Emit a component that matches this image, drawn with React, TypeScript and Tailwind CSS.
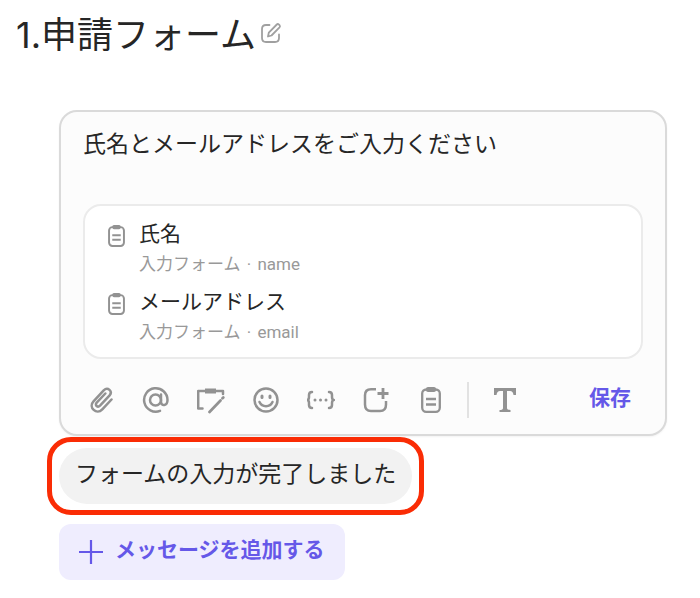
import type { ReactNode } from "react";

function ClipboardIcon({ className }: { className: string }) {
  return (
    <svg viewBox="0 0 20 26" fill="none" stroke="currentColor" strokeWidth="2.300" className={className} aria-hidden="true">
      <rect x="1.200" y="2.500" width="17.600" height="22.300" rx="4" />
      <rect x="5" y="0" width="10" height="5" rx="2" fill="currentColor" stroke="none" />
      <path d="M5 12h10M5 17.500h10" />
    </svg>
  );
}

function Stroke({ children, width = 2.5 }: { children: ReactNode; width?: number }) {
  return (
    <svg
      viewBox="0 0 28 28"
      fill="none"
      stroke="currentColor"
      strokeWidth={width}
      strokeLinecap="round"
      strokeLinejoin="round"
      className="size-7"
      aria-hidden="true"
    >
      {children}
    </svg>
  );
}

function Tool({ label, children }: { label: string; children: ReactNode }) {
  return (
    <button type="button" aria-label={label} className="flex size-7 shrink-0 items-center justify-center">
      {children}
    </button>
  );
}

const fields = [
  { title: "氏名", key: "name" },
  { title: "メールアドレス", key: "email" },
];

export default function App() {
  return (
    <main className="bg-white pt-3 pr-[33px] pb-4 pl-4 font-[Inter,'Noto_Sans_CJK_JP',sans-serif] text-[#262626]">
      <header className="flex items-center gap-1">
        <h1 className="text-[36px] leading-[46px]">1.申請フォーム</h1>
        <button type="button" aria-label="名前を編集" className="pb-1 text-[#a0a0a0]">
          <svg viewBox="0 0 22 22" fill="none" stroke="currentColor" strokeWidth="1.800" strokeLinecap="round" strokeLinejoin="round" className="size-[22px]" aria-hidden="true">
            <path d="M9.500 3H6Q2 3 2 7v9q0 4 4 4h9q4 0 4-4v-3.500" />
            <path d="M8 14.500l.8-3.800 8-8.200q1-1 2.200.1l.5.500q1 1.100 0 2.200l-8 8.200Z" />
          </svg>
        </button>
      </header>

      <div className="ml-[43px] flex flex-col items-start pt-[52px]">
        <form className="w-full rounded-[18px] border-2 border-[#dadada] bg-[#fcfcfc] px-[22px] shadow-xs" onSubmit={(e) => e.preventDefault()}>
          <textarea
            aria-label="メッセージ"
            defaultValue="氏名とメールアドレスをご入力ください"
            rows={2}
            className="mt-4 block h-19 w-full resize-none bg-transparent text-[23px] leading-8 outline-none"
          />
          <ul className="flex flex-col gap-2 rounded-[18px] border-2 border-[#ebebeb] bg-white px-[22px] pt-3 pb-[11px]">
            {fields.map((field) => (
              <li key={field.key} className="flex gap-3">
                <ClipboardIcon className="mt-[7px] h-[22px] w-[19px] shrink-0 text-[#929292]" />
                <div className="pl-px">
                  <p className="text-[21px] leading-8">{field.title}</p>
                  <p className="font-[Roboto,'Noto_Sans_CJK_JP',sans-serif] text-[17px] leading-7 text-[#999]">
                    入力フォーム <span className="mx-0.5">·</span> {field.key}
                  </p>
                </div>
              </li>
            ))}
          </ul>
          <div className="flex h-[75px] items-center gap-[27px] pt-1.5 pl-1 text-[#929292]">
            <Tool label="ファイルを添付">
              <Stroke>
                <path d="M24.500 13.500 15.300 23.300c-5.700 6-14.300-1.800-8.800-7.900L16.700 4.400c4-4 9.500.8 5.700 5.200L13 19.700c-2.300 2.300-5.600-.4-3.300-3l8.600-9.200" />
              </Stroke>
            </Tool>
            <Tool label="メンション">
              <Stroke>
                <circle cx="13.500" cy="14" r="5.500" />
                <path d="M19 8.500v7c0 5.500 6.500 4.500 6.500-1.500a11.700 11.700 0 1 0-7.500 10.900" />
              </Stroke>
            </Tool>
            <Tool label="フォームを編集">
              <Stroke>
                <path d="M5.500 22.500H1.200V5H26v3" />
                <path d="M8 5h11" strokeWidth="5" strokeLinecap="butt" />
                <path d="m12.500 26 11-11.500M25.500 12.300l.8-.8" strokeWidth="2.700" />
              </Stroke>
            </Tool>
            <Tool label="絵文字">
              <Stroke>
                <circle cx="14" cy="14" r="11.500" />
                <path d="M10 10v1.500M18 10v1.500" strokeWidth="3" />
                <path d="M7.500 16c2.500 5.500 10.500 5.500 13 0" />
              </Stroke>
            </Tool>
            <Tool label="変数">
              <Stroke>
                <path d="M5 6q-3 0-3 3v2q0 3-2 3 2 0 2 3v2q0 3 3 3M22 6q3 0 3 3v2q0 3 2 3-2 0-2 3v2q0 3-3 3" />
                <path d="M8 14h.01M13.500 14h.01M19 14h.01" strokeWidth="3" />
              </Stroke>
            </Tool>
            <Tool label="アプリを追加">
              <Stroke>
                <path d="M14 3.200H9Q3 3.200 3 9.200v9.300q0 6.500 6 6.500h9q6 0 6-6.500V15" strokeLinecap="butt" />
                <path d="M21 2v11M15.500 7.500h11" strokeLinecap="butt" strokeWidth="2.800" />
              </Stroke>
            </Tool>
            <Tool label="入力フォーム">
              <ClipboardIcon className="h-[26px] w-[22px]" />
            </Tool>
            <span className="-mx-[5px] h-9 w-0.5 bg-[#e2e2e2]" />
            <Tool label="テキスト書式">
              <svg viewBox="0 0 24 26" className="h-[26px] w-6" fill="currentColor" aria-hidden="true">
                <path d="M1 1h22v7h-2.500q-.5-4-3.500-4h-3v17q0 2 3.500 2v2H6.500v-2Q10 23 10 21V4H7Q4 4 3.500 8H1Z" />
              </svg>
            </Tool>
            <button type="submit" className="mr-3 ml-auto pb-1 text-[21px] leading-8 font-bold whitespace-nowrap text-[#6558e8]">保存</button>
          </div>
        </form>

        <div className="relative mt-3 rounded-full bg-[#f2f2f2] px-4 pt-2.5 pb-3.5">
          <p className="text-[23px] leading-8">フォームの入力が完了しました</p>
          <span className="pointer-events-none absolute -inset-x-3 -inset-y-[11px] rounded-[24px] border-5 border-[#fa2c05]" />
        </div>

        <button type="button" className="mt-5 flex h-14 items-center gap-3 rounded-xl bg-[#efedfe] px-5 text-[21px] leading-8 font-bold text-[#6558e8]">
          <svg viewBox="0 0 24 24" fill="none" stroke="currentColor" strokeWidth="2.200" className="size-6" aria-hidden="true">
            <path d="M12 0v24M0 12h24" />
          </svg>
          <span className="pb-1">メッセージを追加する</span>
        </button>
      </div>
    </main>
  );
}
